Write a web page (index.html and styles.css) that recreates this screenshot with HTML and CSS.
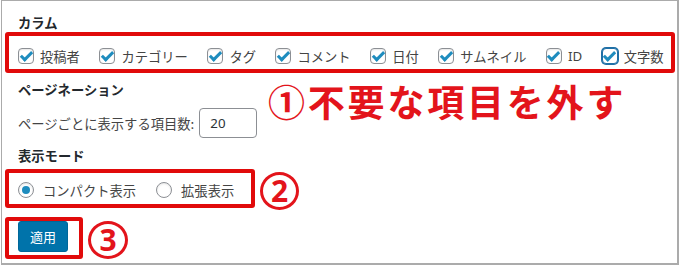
FILE: index.html
```html
<!DOCTYPE html>
<html lang="ja">
  <head>
    <meta charset="UTF-8" />
    <meta name="viewport" content="width=device-width, initial-scale=1.0" />
    <title>表示オプション</title>
    <link rel="stylesheet" href="styles.css">
  </head>
  <body>
    <div class="panel">
      <div class="legend">カラム</div>
      <div class="mark mark-columns">
        <label class="opt"><input type="checkbox" checked>投稿者</label>
        <label class="opt"><input type="checkbox" checked>カテゴリー</label>
        <label class="opt"><input type="checkbox" checked>タグ</label>
        <label class="opt"><input type="checkbox" checked>コメント</label>
        <label class="opt"><input type="checkbox" checked>日付</label>
        <label class="opt"><input type="checkbox" checked>サムネイル</label>
        <label class="opt"><input type="checkbox" checked>ID</label>
        <label class="opt"><input type="checkbox" class="focus" checked>文字数</label>
      </div>

      <div class="pagination">
        <div class="pagination-fields">
          <div class="legend">ページネーション</div>
          <label class="per-page">ページごとに表示する項目数: <input type="text" value="20"></label>
        </div>
        <div class="note note-1">①不要な項目を外す</div>
      </div>

      <div class="legend legend-mode">表示モード</div>
      <div class="step">
        <div class="mark mark-mode">
          <label class="opt"><input type="radio" name="mode" checked>コンパクト表示</label>
          <label class="opt"><input type="radio" name="mode">拡張表示</label>
        </div>
        <div class="num">2</div>
      </div>

      <div class="step step-apply">
        <div class="mark mark-apply">
          <button class="apply">適用</button>
        </div>
        <div class="num">3</div>
      </div>
    </div>
  </body>
</html>
```

FILE: styles.css
```css
/* WordPress screen options panel, annotated */
* {
  box-sizing: border-box;
}

body {
  margin: 0;
  background: #fff;
  font-family: "Noto Sans", "Noto Sans CJK JP", sans-serif;
  font-size: 13.3px;
  color: #444;
}

.panel {
  width: 678px;
  height: 265px;
  margin-left: 1px;
  padding-left: 3px;
  border: 1px solid #ababab;
  border-right-width: 2px;
  border-bottom-width: 2px;
}

.legend {
  padding-left: 13px;
  line-height: 18px;
  font-weight: 600;
  color: #23282d;
  font-family: "Noto Sans CJK JP", sans-serif;
}

.panel > .legend:first-child {
  margin-top: 13px;
}

/* red hand-drawn boxes */
.mark {
  border: 4px solid #e10a0a;
  border-radius: 3px;
}

.mark-columns {
  width: 670px;
  height: 41px;
  padding: 10px 0 3px 9px;
  display: flex;
  align-items: center;
}

.opt {
  display: flex;
  align-items: center;
  height: 20px;
  margin-right: 19.5px;
  font-family: "Noto Sans", "Noto Sans CJK JP", sans-serif;
  white-space: nowrap;
}

.opt input {
  margin: 0 6px 0 0;
}

input[type="checkbox"],
input[type="radio"] {
  appearance: none;
  width: 16px;
  height: 16px;
  border: 1px solid #8c8f94;
  border-radius: 4px;
  background: #fff;
  box-shadow: inset 0 1px 2px rgba(0, 0, 0, 0.1);
  display: inline-grid;
  place-items: center;
  flex-shrink: 0;
}

input[type="checkbox"]:checked::before {
  content: "";
  width: 4px;
  height: 9px;
  border: solid #1e8cbe;
  border-width: 0 3px 3px 0;
  transform: translateY(-1px) rotate(45deg);
}

input[type="checkbox"].focus {
  border-color: #1f6fa6;
  box-shadow: 0 0 0 1px #1f6fa6;
}

input[type="radio"] {
  border-radius: 50%;
}

input[type="radio"]:checked::before {
  content: "";
  width: 8px;
  height: 8px;
  border-radius: 50%;
  background: #1e8cbe;
}

.mark-mode .opt input {
  margin-right: 9px;
}

.mark-mode .opt {
  margin-right: 20px;
}

.mark-mode .opt:last-child {
  margin-right: 0;
}

/* pagination */
.pagination {
  display: flex;
  align-items: flex-start;
  margin-top: 8px;
}

.pagination-fields {
  width: 263px;
}

.per-page {
  display: flex;
  align-items: center;
  margin-top: 9px;
  padding-left: 13px;
  white-space: nowrap;
  font-family: "Noto Sans CJK JP", sans-serif;
}

.per-page input {
  width: 58px;
  height: 30px;
  margin-left: 5px;
  padding: 0 10px;
  border: 1px solid #8c8f94;
  border-radius: 4px;
  font: inherit;
  font-family: "Noto Sans", sans-serif;
  color: #2c3338;
}

.note {
  color: #e3141b;
  font-family: "Noto Sans CJK JP", sans-serif;
  font-weight: 700;
  white-space: nowrap;
}

.note-1 {
  font-size: 37px;
  line-height: 1.1;
  letter-spacing: 2.8px;
}

.legend-mode {
  margin-top: 9px;
}

.step {
  display: flex;
  align-items: flex-start;
  gap: 5px;
  margin-top: 4px;
}

/* circled step numbers */
.num {
  width: 39px;
  height: 38px;
  margin-top: 3px;
  border: 3px solid #e3141b;
  border-radius: 50%;
  display: grid;
  place-items: center;
  color: #e3141b;
  font-family: "Noto Sans", sans-serif;
  font-weight: 700;
  font-size: 30px;
  line-height: 1;
}

.mark-mode {
  width: 250px;
  height: 39px;
  padding: 7px 0 4px 9px;
  display: flex;
  align-items: center;
}

.step-apply {
  margin-top: 7px;
}

.step-apply .num {
  margin-top: 4px;
  width: 40px;
}

.mark-apply {
  width: 78px;
  height: 42px;
  padding: 0 11px 3px 9px;
}

.apply {
  width: 50px;
  height: 31px;
  border: 1px solid #006799;
  border-radius: 3px;
  background: #0073aa;
  color: #fff;
  font-family: "Noto Sans CJK JP", sans-serif;
  font-size: 13px;
}
```
